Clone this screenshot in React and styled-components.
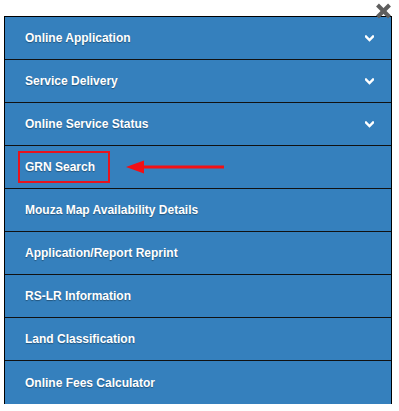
import React from "react";
import styled, { createGlobalStyle } from "styled-components";

const GlobalStyle = createGlobalStyle`
  html, body {
    margin: 0;
    padding: 0;
    background: #fff;
  }
  body {
    font-family: "Liberation Sans", Arial, sans-serif;
  }
`;

const Wrapper = styled.div`
  position: relative;
  width: 399px;
  height: 411px;
  padding: 16px 0 0 4px;
  box-sizing: border-box;
  overflow: hidden;
`;

const CloseButton = styled.button`
  position: absolute;
  top: 2px;
  left: 374px;
  width: 18px;
  height: 17px;
  padding: 0;
  border: 0;
  background: transparent;
  display: flex;
  align-items: center;
  justify-content: center;
  cursor: pointer;
  z-index: 2;
`;

const Menu = styled.ul`
  margin: 0;
  padding: 0;
  list-style: none;
  width: 388px;
  border: 1px solid #000;
  border-bottom: 0;
  box-sizing: border-box;
  background: #3580bd;
`;

const Item = styled.li`
  height: 43px;
  box-sizing: border-box;
  border-bottom: 1px solid #111;
  display: flex;
  align-items: center;
  padding: 0 17px 0 20px;
  color: #fff;
  font-size: 12px;
  font-weight: bold;
  text-shadow: 0 1px 1px rgba(0, 0, 0, 0.35);
  cursor: pointer;

  &:last-child {
    border-bottom: 0;
  }
`;

const Label = styled.span`
  flex: 0 0 auto;
  white-space: nowrap;
`;

const Highlight = styled.span`
  flex: 0 0 auto;
  display: inline-flex;
  align-items: center;
  height: 32px;
  box-sizing: border-box;
  margin-left: -7px;
  padding: 0 13px 0 5px;
  border: 2px solid #e8141c;
  white-space: nowrap;
`;

const Spacer = styled.span`
  flex: 1 1 auto;
`;

const Chevron = () => (
  <svg width="9" height="7" viewBox="0 0 9 7">
    <polyline
      points="1,1.5 4.5,5 8,1.5"
      fill="none"
      stroke="#fff"
      strokeWidth="2.4"
      strokeLinecap="square"
    />
  </svg>
);

const Arrow = () => (
  <svg width="98" height="14" viewBox="0 0 98 14" style={{ marginLeft: 16 }}>
    <rect x="16" y="5.5" width="82" height="3" fill="#f21015" />
    <polygon points="0,7 18,0.5 18,13.5" fill="#f21015" />
  </svg>
);

const CloseIcon = () => (
  <svg width="17" height="16" viewBox="0 0 17 16">
    <g stroke="#5e5e5e" strokeWidth="4" strokeLinecap="butt">
      <line x1="2.5" y1="2" x2="14.5" y2="14" />
      <line x1="14.5" y1="2" x2="2.5" y2="14" />
    </g>
  </svg>
);

const items = [
  { label: "Online Application", dropdown: true },
  { label: "Service Delivery", dropdown: true },
  { label: "Online Service Status", dropdown: true },
  { label: "GRN Search", marked: true },
  { label: "Mouza Map Availability Details" },
  { label: "Application/Report Reprint" },
  { label: "RS-LR Information" },
  { label: "Land Classification" },
  { label: "Online Fees Calculator" },
];

export default function App() {
  return (
    <Wrapper>
      <GlobalStyle />
      <CloseButton aria-label="Close">
        <CloseIcon />
      </CloseButton>
      <Menu>
        {items.map((item) =>
          item.marked ? (
            <Item key={item.label}>
              <Highlight>{item.label}</Highlight>
              <Arrow />
            </Item>
          ) : (
            <Item key={item.label}>
              <Label>{item.label}</Label>
              <Spacer />
              {item.dropdown && <Chevron />}
            </Item>
          )
        )}
      </Menu>
    </Wrapper>
  );
}
